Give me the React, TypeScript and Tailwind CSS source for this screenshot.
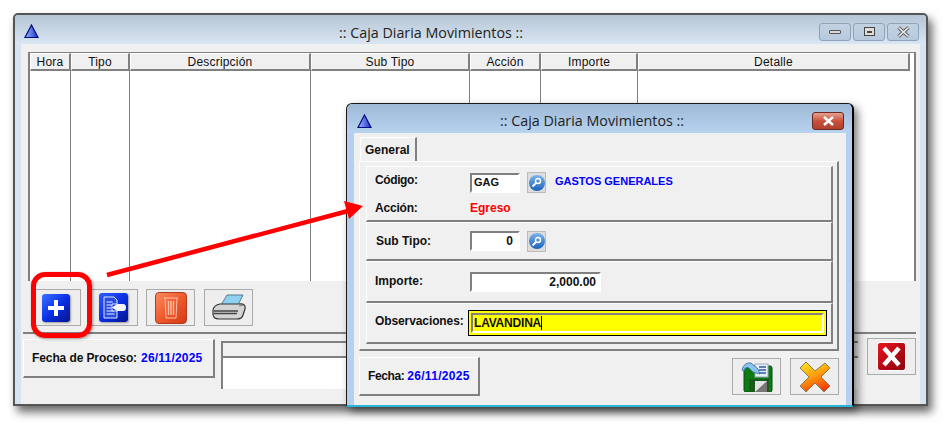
import type { ReactNode } from 'react';

const columns = [
  { label: 'Hora', width: 'w-[41px]' },
  { label: 'Tipo', width: 'w-[59px]' },
  { label: 'Descripción', width: 'w-[181px]' },
  { label: 'Sub Tipo', width: 'w-[159px]' },
  { label: 'Acción', width: 'w-[71px]' },
  { label: 'Importe', width: 'w-[97px]' },
  { label: 'Detalle', width: 'w-[272px]' },
];

function TriangleLogo() {
  return (
    <svg width="15" height="15" viewBox="0 0 15 15">
      <defs>
        <linearGradient id="tri" x1="0" y1="0" x2="1" y2="0">
          <stop offset="0" stopColor="#9db8ff" />
          <stop offset="1" stopColor="#1c2fc8" />
        </linearGradient>
      </defs>
      <path d="M7.5 1 L14 13.5 H1 Z" fill="url(#tri)" stroke="#000a80" strokeWidth="1.2" />
    </svg>
  );
}

function ToolButton({ width, children }: { width: string; children: ReactNode }) {
  return (
    <div className={`${width} h-[37px] flex items-center justify-center border border-[#aaaaaa] bg-[#eeeeee]`}>
      {children}
    </div>
  );
}

function PlusIcon() {
  return (
    <div className="w-[28px] h-[28px] rounded-[3px] bg-gradient-to-br from-[#3f6dff] via-[#0b2fe6] to-[#06148c] shadow-[1px_1px_2px_rgba(0,0,0,0.35)] flex items-center justify-center">
      <svg width="18" height="18" viewBox="0 0 18 18">
        <path d="M7 1h4v6h6v4h-6v6H7v-6H1V7h6z" fill="#fff" />
      </svg>
    </div>
  );
}

function DocIcon() {
  return (
    <div className="w-[29px] h-[29px] rounded-[3px] bg-gradient-to-br from-[#2f5cff] via-[#0b2fe6] to-[#06148c] shadow-[1px_1px_2px_rgba(0,0,0,0.35)] flex items-center justify-center">
      <svg width="25" height="23" viewBox="0 0 25 23">
        <path d="M3 1h10l3 3v4h-5v7h5v7H3z" fill="#2a4be0" stroke="#dfe5ff" />
        <path d="M5.5 6h6M5.5 9h5M5.5 12h5M5.5 15h7M5.5 18h8" stroke="#e8ecff" />
        <path d="M11 11.5l5-3.5h6q3 0 3 3.5t-3 3.5h-6z" fill="#f4f4f4" />
      </svg>
    </div>
  );
}

function TrashIcon() {
  return (
    <div className="w-[32px] h-[32px] rounded-[4px] border border-[#b13a20] bg-gradient-to-br from-[#f98a5c] via-[#ee5a2c] to-[#d53a16] flex items-center justify-center">
      <svg width="16" height="24" viewBox="0 0 16 24" fill="none" stroke="#ffc0a8">
        <path d="M1 2h14M2 2l1 20h10l1-20" />
        <path d="M5.5 5v14M8 5v14M10.5 5v14" strokeWidth="1.4" />
      </svg>
    </div>
  );
}

function PrinterIcon() {
  return (
    <svg width="34" height="27" viewBox="0 0 34 27">
      <path d="M9 11 L15 1 H31 L26 11 Z" fill="#8ed0f0" stroke="#5a7a8a" />
      <path d="M1 16 Q2 11 8 10 H27 Q34 9 33 15 L31 21 Q30 25 25 25 H7 Q1 25 1 20 Z" fill="#d4d4d4" stroke="#333" strokeWidth="1.2" />
      <path d="M2 17 H26 M2 19.5 H25" stroke="#444" strokeWidth="1.5" />
      <path d="M27 12 L31 11" stroke="#777" />
    </svg>
  );
}

function SearchButton() {
  return (
    <div className="w-[19px] h-[21px] bg-[#dddddd] border border-[#bbbbbb] flex items-center justify-center">
      <div className="w-[16px] h-[16px] rounded-full bg-gradient-to-b from-[#7ab4ea] to-[#1b62b8] flex items-center justify-center">
        <svg width="11" height="11" viewBox="0 0 11 11" fill="none" stroke="#fff">
          <circle cx="7" cy="4" r="2.5" strokeWidth="1.4" />
          <path d="M5 6 L1.5 9.5" strokeWidth="1.8" />
        </svg>
      </div>
    </div>
  );
}

function SaveIcon() {
  return (
    <svg width="32" height="31" viewBox="0 0 32 31">
      <path d="M3 5 H29 Q31 5 31 7 V29 Q31 31 29 31 H5 Q3 31 3 29 Z" fill="#0d7a12" stroke="#0b4a10" />
      <rect x="14" y="3" width="13" height="13" fill="#e8eefa" stroke="#9ab" />
      <path d="M18 6h7M18 9h7M18 12h7" stroke="#2f5aa8" strokeWidth="1.5" />
      <rect x="8" y="18" width="20" height="13" fill="#1a5a1c" />
      <rect x="14" y="20" width="12" height="11" fill="#e4e4e4" />
      <path d="M14 31 L26 20 V31 Z" fill="#777" />
      <path d="M1 9 Q3 1 10 2 L17 8 L19 13 L12 11 L8 7 Q4 5 3 10 Z" fill="#8cc4ee" stroke="#3e7eb0" />
    </svg>
  );
}

function OrangeCross() {
  return (
    <svg width="32" height="32" viewBox="0 0 32 32">
      <defs>
        <linearGradient id="ox" x1="0.2" y1="0" x2="0.6" y2="1">
          <stop offset="0" stopColor="#ffe41a" />
          <stop offset="0.5" stopColor="#ff9a0a" />
          <stop offset="1" stopColor="#f23a08" />
        </linearGradient>
      </defs>
      <path d="M7 1 L16 10 L26 2 L31 7 L22 16 L31 25 L25 31 L16 22 L7 31 L1 25 L10 16 L1 7 Z" fill="url(#ox)" stroke="#8a7a5a" strokeLinejoin="round" />
    </svg>
  );
}

function RedCross() {
  return (
    <div className="w-[29px] h-[29px] rounded-[3px] bg-gradient-to-br from-[#e8141e] to-[#8c0410] border border-white flex items-center justify-center">
      <svg width="21" height="21" viewBox="0 0 21 21">
        <path d="M3 2 L18 19 M18 2 L3 19" stroke="#fff" strokeWidth="4.5" />
      </svg>
    </div>
  );
}

function CaptionButton({ children }: { children: ReactNode }) {
  return (
    <div className="w-[32px] h-[18px] rounded-[3px] border border-[#8fa3b8] bg-gradient-to-b from-[#c2d2e2] to-[#b6cadd] flex items-center justify-center">
      {children}
    </div>
  );
}

function Label({ children, className = '' }: { children: ReactNode; className?: string }) {
  return <span className={`text-[12px] font-bold text-[#111] ${className}`}>{children}</span>;
}

function RaisedRow({ height, children }: { height: string; children: ReactNode }) {
  return (
    <div className={`${height} relative border-t border-l border-white border-b-2 border-r-2 border-b-[#808080] border-r-[#808080] flex items-center pl-[8px]`}>
      {children}
    </div>
  );
}

function Input({ width, className = '', children }: { width: string; className?: string; children: ReactNode }) {
  return (
    <div className={`${width} h-[20px] bg-white border-2 border-b-white border-r-white border-t-[#808080] border-l-[#808080] flex items-center px-[2px] font-bold text-[#111] ${className}`}>
      {children}
    </div>
  );
}

function Dialog() {
  return (
    <div className="absolute left-[346px] top-[103px] w-[508px] h-[304px] rounded-t-[6px] border border-[#1a1a1a] border-b-2 border-b-[#2ab4d8] border-r-2 border-r-[#000] bg-[#b5d0ea] flex flex-col shadow-[4px_4px_8px_rgba(0,0,0,0.5)]">
      <div className="h-[29px] shrink-0 flex items-center pt-[5px] pl-[10px] pr-[8px] rounded-t-[6px] bg-gradient-to-b from-[#9db9d6] to-[#b8d3ee]">
        <TriangleLogo />
        <div className="flex-1 text-center text-[14.3px] text-[#222] [font-family:'Open_Sans',sans-serif]">:: Caja Diaria Movimientos ::</div>
        <div className="w-[32px] h-[18px] rounded-[3px] border border-[#6a2a20] bg-gradient-to-b from-[#e6a090] via-[#c8503c] to-[#b04030] flex items-center justify-center">
          <svg width="13" height="10" viewBox="0 0 13 10">
            <path d="M2 1 L11 9 M11 1 L2 9" stroke="#fff" strokeWidth="2.5" />
          </svg>
        </div>
      </div>
      <div className="ml-[7px] mr-[6px] flex-1 bg-[#f0f0f0] pt-[4px] pl-[5px] pr-[7px] flex flex-col">
        <div className="w-[57px] h-[24px] ml-[1px] border-t border-l border-white border-r-2 border-r-[#808080] flex items-center pl-[4px]">
          <Label>General</Label>
        </div>
        <div className="h-[190px] border-t border-l border-white border-r-2 border-r-[#808080] border-b-2 border-b-[#808080] pt-[4px] pl-[6px] pr-[4px] flex flex-col">
          <RaisedRow height="h-[56px]">
            <div className="self-start pt-[5px] flex flex-col gap-[8px]">
              <div className="flex items-center h-[21px]">
                <Label className="w-[95px] pb-[5px] tracking-[-0.4px]">Código:</Label>
                <Input width="w-[50px]" className="text-[11px]">GAG</Input>
                <div className="ml-[7px]"><SearchButton /></div>
                <span className="ml-[9px] pb-[2px] text-[11px] font-bold text-[#0000ff]">GASTOS GENERALES</span>
              </div>
              <div className="flex items-center h-[14px]">
                <Label className="w-[95px] tracking-[-0.2px]">Acción:</Label>
                <span className="text-[12px] font-bold text-[#ff0000]">Egreso</span>
              </div>
            </div>
          </RaisedRow>
          <RaisedRow height="h-[39px]">
            <Label className="w-[95px] pl-[1px]">Sub Tipo:</Label>
            <Input width="w-[50px]" className="justify-end !pr-[5px] text-[12px]">0</Input>
            <div className="ml-[7px]"><SearchButton /></div>
          </RaisedRow>
          <RaisedRow height="h-[42px]">
            <Label className="w-[95px] pb-[2px]">Importe:</Label>
            <Input width="w-[131px]" className="justify-end !pr-[3px] text-[12px]">2,000.00</Input>
          </RaisedRow>
          <RaisedRow height="h-[41px]">
            <Label className="w-[93px] pb-[4px] tracking-[-0.1px]">Observaciones:</Label>
            <div className="w-[359px] h-[26px] border border-black bg-[#ffff00] p-[2px]">
              <div className="h-full bg-[#ffff00] border-2 border-t-[#808080] border-l-[#808080] border-b-white border-r-white flex items-center pl-[1px] text-[12px] font-bold text-[#111] tracking-[-0.2px]">
                LAVANDINA<span className="w-px h-[14px] bg-black" />
              </div>
            </div>
          </RaisedRow>
        </div>
        <div className="mt-[6px] flex items-start justify-between">
          <div className="w-[121px] h-[39px] border-t border-l border-white border-r-2 border-b-2 border-r-[#808080] border-b-[#808080] flex items-center pl-[8px] gap-[3px]">
            <Label className="tracking-[-0.4px]">Fecha:</Label>
            <span className="text-[12px] font-bold text-[#0000ff] tracking-[0.3px]">26/11/2025</span>
          </div>
          <div className="flex gap-[9px] mt-[1px]">
            <ToolButton width="w-[49px]"><SaveIcon /></ToolButton>
            <ToolButton width="w-[49px]"><OrangeCross /></ToolButton>
          </div>
        </div>
      </div>
    </div>
  );
}

export default function App() {
  return (
    <div className="relative w-[950px] h-[427px] overflow-hidden bg-white pl-[13px] pt-[13px] [font-family:'Liberation_Sans',sans-serif]">
      <div className="w-[915px] h-[393px] rounded-t-[5px] border-2 border-[#555555] bg-[#d6e4f2] flex flex-col shadow-[4px_6px_10px_rgba(0,0,0,0.6)]">
        <div className="h-[29px] shrink-0 flex items-center pt-[4px] pl-[9px] pr-[7px] bg-gradient-to-b from-[#b6c6d6] to-[#d8e5f2] rounded-t-[4px]">
          <TriangleLogo />
          <div className="flex-1 text-center text-[14.3px] text-[#222] mt-[2px] pl-[4px] [font-family:'Open_Sans',sans-serif]">:: Caja Diaria Movimientos ::</div>
          <div className="flex gap-[2px]">
            <CaptionButton><span className="w-[12px] h-[4px] rounded-[1px] bg-[#d8d8d8] border border-[#555]" /></CaptionButton>
            <CaptionButton><span className="w-[11px] h-[9px] border border-[#444] bg-[#dddddd] flex items-center justify-center"><span className="w-[5px] h-[2px] bg-[#444]" /></span></CaptionButton>
            <CaptionButton>
              <svg width="15" height="12" viewBox="0 0 15 12">
                <path d="M2.5 1.5 L12.5 10.5 M12.5 1.5 L2.5 10.5" stroke="#555" strokeWidth="3.4" />
                <path d="M2.5 1.5 L12.5 10.5 M12.5 1.5 L2.5 10.5" stroke="#eef2f6" strokeWidth="1.6" />
              </svg>
            </CaptionButton>
          </div>
        </div>
        <div className="mx-[6px] flex-1 bg-[#f0f0f0] pt-[8px] pl-[2px] pr-[4px] flex flex-col">
          <div className="h-[229px] ml-[5px] border-l-2 border-t border-r-2 border-[#808080] bg-white flex flex-col">
            <div className="flex h-[18px] shrink-0">
              {columns.map((c) => (
                <div key={c.label} className={`${c.width} shrink-0 border-t border-l border-white border-r-2 border-b-2 border-r-[#808080] border-b-[#808080] bg-[#f0f0f0] flex items-center justify-center text-[12px] tracking-[0.2px] text-[#111]`}>
                  {c.label}
                </div>
              ))}
            </div>
            <div className="flex flex-1">
              {columns.slice(0, -1).map((c) => (
                <div key={c.label} className={`${c.width} shrink-0 border-r border-[#808080]`} />
              ))}
            </div>
          </div>
          <div className="h-[53px] border-b-2 border-[#808080] flex items-start gap-[8px] pt-[8px] pl-[8px]">
            <ToolButton width="w-[50px]"><PlusIcon /></ToolButton>
            <ToolButton width="w-[49px]"><DocIcon /></ToolButton>
            <ToolButton width="w-[49px]"><TrashIcon /></ToolButton>
            <div className="ml-[1px]">
              <ToolButton width="w-[49px]"><PrinterIcon /></ToolButton>
            </div>
          </div>
          <div className="flex items-start mt-[5px]">
            <div className="w-[192px] h-[39px] border-t border-l border-white border-r-2 border-b-2 border-r-[#808080] border-b-[#808080] flex items-center pl-[8px] gap-[4px]">
              <Label className="tracking-[-0.1px]">Fecha de Proceso:</Label>
              <span className="text-[12px] font-bold text-[#0000ff] tracking-[0.2px]">26/11/2025</span>
            </div>
            <div className="w-[637px] h-[48px] ml-[6px] mt-[2px] border-l-2 border-t-2 border-[#808080] bg-white flex flex-col">
              <div className="h-[15px] bg-[#f0f0f0] border-b-2 border-[#808080]" />
            </div>
            <div className="ml-[9px] -mt-[1px]">
              <ToolButton width="w-[49px]"><RedCross /></ToolButton>
            </div>
          </div>
        </div>
      </div>

      <Dialog />

      <svg className="absolute left-[100px] top-[195px]" width="270" height="90" viewBox="0 0 270 90">
        <path d="M7 80 L248 16" stroke="#ff0000" strokeWidth="4.5" />
        <path d="M263 11 L244 6 L249 24 Z" fill="#ff0000" />
      </svg>
      <div className="absolute left-[31px] top-[272px] w-[61px] h-[66px] rounded-[14px] border-[5px] border-[#ff0000] shadow-[1px_1px_3px_rgba(0,0,0,0.4)]" />
    </div>
  );
}
